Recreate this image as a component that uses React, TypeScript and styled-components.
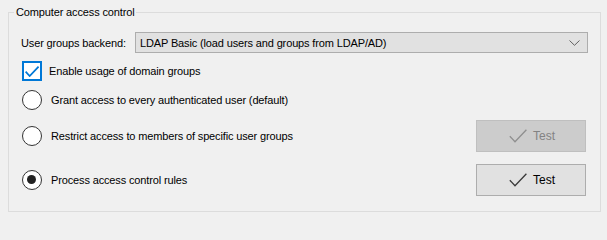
import styled, { createGlobalStyle } from 'styled-components';

const GlobalStyle = createGlobalStyle`
  html, body {
    margin: 0;
    padding: 0;
    background: #f0f0f0;
  }

  body {
    font-family: 'Liberation Sans', Arial, sans-serif;
    font-size: 11px;
    letter-spacing: -0.14px;
    color: #000;
  }
`;

const CheckIcon = ({ color, width = 1.3 }: { color: string; width?: number }) => (
  <svg width="18" height="14" viewBox="0 0 18 14" fill="none">
    <path d="M0.8 7.2 L6 12.8 L17.4 0.8" stroke={color} strokeWidth={width} />
  </svg>
);

const ChevronIcon = () => (
  <svg width="11" height="6" viewBox="0 0 11 6" fill="none">
    <path d="M0.5 0.5 L5.5 5.3 L10.5 0.5" stroke="#606060" strokeWidth="1" />
  </svg>
);

const options = [
  { id: 'all', label: 'Grant access to every authenticated user (default)', checked: false },
  { id: 'groups', label: 'Restrict access to members of specific user groups', checked: false, test: 'disabled' },
  { id: 'rules', label: 'Process access control rules', checked: true, test: 'enabled' },
];

const App = () => {
  return (
    <StPage>
      <GlobalStyle />
      <StGroup>
        <StLegend>Computer access control</StLegend>

        <StBody>
          <StComboRow>
            <StLabel>User groups backend:</StLabel>
            <StCombo>
              <span>LDAP Basic (load users and groups from LDAP/AD)</span>
              <ChevronIcon />
            </StCombo>
          </StComboRow>

          <StCheckRow>
            <StCheckBox>
              <CheckIcon color="#0078d7" width={2.2} />
            </StCheckBox>
            <span>Enable usage of domain groups</span>
          </StCheckRow>

          {options.map((opt) => (
            <StRadioRow key={opt.id} $tall={!!opt.test}>
              <StRadio $checked={opt.checked} />
              <StRadioLabel>{opt.label}</StRadioLabel>
              {opt.test && (
                <StButton $disabled={opt.test === 'disabled'}>
                  <CheckIcon color={opt.test === 'disabled' ? '#8f8f8f' : '#3a3a3a'} />
                  <span>Test</span>
                </StButton>
              )}
            </StRadioRow>
          ))}
        </StBody>
      </StGroup>
    </StPage>
  );
};

export default App;

const StPage = styled.div`
  width: 607px;
  height: 219px;
  box-sizing: border-box;
  padding: 4px 6px 7px 8px;
`;

const StGroup = styled.fieldset`
  height: 100%;
  box-sizing: border-box;
  margin: 0;
  padding: 0 0 0 5px;
  border: 1px solid #dcdcdc;
`;

const StLegend = styled.legend`
  padding: 0 2px;
  height: 16px;
  line-height: 16px;
`;

const StBody = styled.div`
  display: flex;
  flex-direction: column;
  padding: 12px 13px 0 8px;
  white-space: nowrap;
`;

const StComboRow = styled.div`
  display: flex;
  align-items: center;
  height: 21px;
  margin-right: -1px;
`;

const StLabel = styled.span`
  width: 114px;
  flex-shrink: 0;
  margin-left: -1px;
`;

const StCombo = styled.div`
  flex: 1;
  display: flex;
  align-items: center;
  justify-content: space-between;
  height: 21px;
  box-sizing: border-box;
  padding: 0 7px 0 4px;
  border: 1px solid #adadad;
  background: #e1e1e1;
`;

const StCheckRow = styled.label`
  display: flex;
  align-items: center;
  gap: 7px;
  height: 20px;
  margin-top: 8px;
`;

const StCheckBox = styled.span`
  display: flex;
  align-items: center;
  justify-content: center;
  width: 20px;
  height: 20px;
  box-sizing: border-box;
  border: 2px solid #0078d7;
  background: #fff;

  > svg {
    width: 14px;
    height: 11px;
    margin-top: 1px;
  }
`;

const StRadioRow = styled.div<{ $tall: boolean }>`
  display: flex;
  align-items: center;
  height: ${({ $tall }) => ($tall ? '32px' : '20px')};
  margin-top: ${({ $tall }) => ($tall ? '10px' : '9px')};

  &:last-child {
    margin-top: 12px;
  }
`;

const StRadio = styled.span<{ $checked: boolean }>`
  position: relative;
  width: 20px;
  height: 20px;
  flex-shrink: 0;
  box-sizing: border-box;
  border: 1.5px solid #333;
  border-radius: 50%;
  background: #fff;

  &::after {
    content: '';
    display: ${({ $checked }) => ($checked ? 'block' : 'none')};
    position: absolute;
    left: 4px;
    top: 4px;
    width: 9px;
    height: 9px;
    border-radius: 50%;
    background: #222;
  }
`;

const StRadioLabel = styled.span`
  flex: 1;
  margin-left: 9px;
`;

const StButton = styled.button<{ $disabled: boolean }>`
  display: flex;
  align-items: center;
  justify-content: center;
  gap: 6px;
  width: 110px;
  height: 32px;
  padding: 0 0 0 2px;
  margin-right: 1px;
  font: inherit;
  font-size: 12px;
  color: ${({ $disabled }) => ($disabled ? '#838383' : '#000')};
  background: ${({ $disabled }) => ($disabled ? '#cccccc' : '#e1e1e1')};
  border: 1px solid ${({ $disabled }) => ($disabled ? '#bfbfbf' : '#adadad')};
`;
